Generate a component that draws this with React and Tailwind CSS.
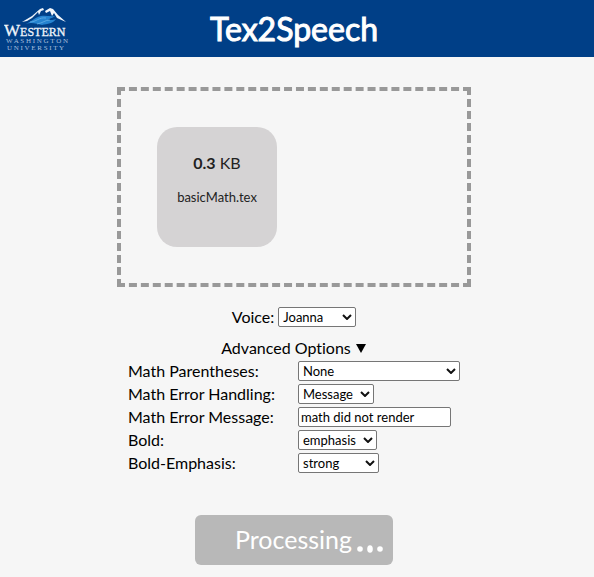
import React from "react";

function Logo() {
  return (
    <svg viewBox="0 0 66 45" className="h-[45px] w-[66px] shrink-0" role="img" aria-label="Western Washington University">
      <path d="M18 16 28 10 36 3l3-1 1 2-3 1-2 4-1-3-6 6-5 3Z" fill="#eef3f9" />
      <path d="m41 5 5-3 3 1 5 6 8 7-9-4-3-5-2 3-2-5-4 2Z" fill="#f2f6fb" />
      <path d="M19 18c7 0 11-7 18-8 5-1 9 1 14 0-2 2-5 2-7 4 3 0 6 0 8-1-2 4-9 5-14 6-4-1-7-2-11-2-3 0-5 1-8 1Z" fill="#2583d0" />
      <path d="M26 16c6 0 9-5 16-4M33 18c6-1 8-4 13-4" stroke="#66afe6" strokeWidth="0.8" fill="none" />
      <g fontFamily="Liberation Serif, serif">
        <text x="0" y="30" fill="#f0f4fa" fontSize="12" stroke="#f0f4fa" strokeWidth="0.3">
          <tspan fontSize="17">W</tspan>ESTERN
        </text>
        <text x="2" y="37" fill="#a9bfdd" fontSize="7">W A S H I N G T O N</text>
        <text x="3" y="44" fill="#a9bfdd" fontSize="7">U N I V E R S I T Y</text>
      </g>
    </svg>
  );
}

function Select({ id, options, width }) {
  return (
    <span className="relative inline-flex">
      <select
        id={id}
        className={`h-5 appearance-none rounded-xs border border-[#767676] bg-white pr-5 pl-1 text-[13px] leading-4 text-black ${width}`}
      >
        {options.map((o) => (
          <option key={o}>{o}</option>
        ))}
      </select>
      <svg viewBox="0 0 10 6" className="pointer-events-none absolute top-[7px] right-1 h-1.5 w-2.5" aria-hidden="true">
        <path d="m1 1 4 4 4-4" fill="none" stroke="#111" strokeWidth="2" />
      </svg>
    </span>
  );
}

function Row({ id, label, children }) {
  return (
    <div className="flex h-[23px] items-center">
      <label htmlFor={id} className="w-[170px]">{label}</label>
      {children}
    </div>
  );
}

export default function App() {
  return (
    <div className="min-h-screen bg-[#f6f6f6] font-['Lato',sans-serif] text-base text-black [font-variant-ligatures:none]">
      <header className="grid h-[57px] grid-cols-[1fr_auto_1fr] items-center bg-[#003f87] pr-2.5 pl-1">
        <Logo />
        <h1 className="text-[32px] leading-10 font-normal text-white [-webkit-text-stroke:1px_white]">Tex2Speech</h1>
      </header>

      <main className="flex flex-col items-center pt-[30px] pr-1.5">
        <section className="h-[200px] w-full max-w-[354px] border-4 border-dashed border-[#999] p-9" aria-label="Uploaded files">
          <div className="flex size-[120px] flex-col items-center rounded-[20px] bg-[#d5d3d4] pt-[26px] text-[#222]">
            <p className="leading-5"><strong>0.3</strong> KB</p>
            <p className="mt-4 text-[13px] leading-4">basicMath.tex</p>
          </div>
        </section>

        <div className="mt-5 flex h-5 items-center gap-1">
          <label htmlFor="voice">Voice:</label>
          <Select id="voice" width="w-[78px]" options={["Joanna", "Matthew"]} />
        </div>

        <button type="button" className="mt-[11px] flex items-center gap-1 leading-5">
          Advanced Options
          <svg viewBox="0 0 12 10" className="h-2.5 w-3" aria-hidden="true">
            <path d="M1 1h10L6 10Z" />
          </svg>
        </button>

        <form className="mt-px">
          <Row id="parens" label="Math Parentheses:">
            <Select id="parens" width="w-[162px]" options={["None", "Parentheses"]} />
          </Row>
          <Row id="handling" label="Math Error Handling:">
            <Select id="handling" width="w-[76px]" options={["Message", "Skip"]} />
          </Row>
          <Row id="message" label="Math Error Message:">
            <input
              id="message"
              type="text"
              defaultValue="math did not render"
              className="h-5 w-[153px] rounded-xs border border-[#767676] bg-white px-0.5 text-[13px]"
            />
          </Row>
          <Row id="bold" label="Bold:">
            <Select id="bold" width="w-[79px]" options={["emphasis", "none"]} />
          </Row>
          <Row id="level" label="Bold-Emphasis:">
            <Select id="level" width="w-[81px]" options={["strong", "moderate"]} />
          </Row>
        </form>

        <button type="button" className="mt-[41px] flex h-[50px] w-[198px] items-center rounded-md bg-[#b8b8b8] pl-10 text-[25px] text-white">
          Processing
          <svg viewBox="0 0 28 10" className="mt-5 ml-1 h-2.5 w-7" fill="currentColor" aria-hidden="true">
            <circle cx="4" cy="4" r="2.8" />
            <ellipse cx="14" cy="4" rx="2.8" ry="3.8" />
            <circle cx="24" cy="4" r="2.8" />
          </svg>
        </button>
      </main>
    </div>
  );
}
